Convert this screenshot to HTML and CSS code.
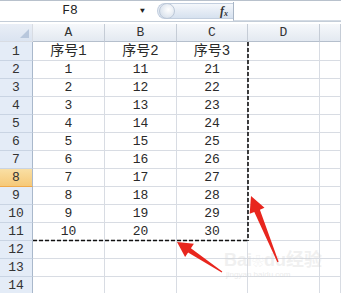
FILE: index.html
```
<!DOCTYPE html>
<html lang="zh-CN">
<head>
    <meta charset="UTF-8">
    <title>序号</title>
    <link rel="stylesheet" href="styles.css">
</head>
<body>
    <div class="formula-bar">
        <div class="name-box">F8</div>
        <div class="name-arrow">&#9660;</div>
        <div class="fx-pill">
            <span class="knob"></span>
            <span class="fx">f<sub>x</sub></span>
        </div>
        <div class="formula-input"></div>
    </div>

    <div class="sheet">
        <div class="corner"></div>
        <div class="col-head">A</div>
        <div class="col-head">B</div>
        <div class="col-head">C</div>
        <div class="col-head">D</div>
        <div class="col-head"></div>

        <div class="row-head first">1</div>
        <div class="cell first cjk">序号1</div>
        <div class="cell first cjk">序号2</div>
        <div class="cell first cjk">序号3</div>
        <div class="cell first"></div>
        <div class="cell first"></div>
    </div>

    <svg class="overlay" width="341" height="293" viewBox="0 0 341 293">
        <!-- copy marquee round A1:C11 -->
        <line x1="248" y1="42" x2="248" y2="241" class="marquee"/>
        <line x1="33" y1="240.5" x2="249" y2="240.5" class="marquee"/>
        <text x="224" y="266" class="wm">Bai<tspan class="paw">❀</tspan>du经验</text>
        <text x="226" y="277" class="wm-small">jingyan.baidu.com</text>
        <polygon class="arrow" points="177,242 193.9,243.7 190.9,248.2 222.3,271.6 221.7,272.4 188.1,252.4 185.1,257"/>
        <polygon class="arrow" points="251,196 264.5,207.8 259.9,209.7 278.6,261.7 277.4,262.3 254.3,212 249.7,213.8"/>
    </svg>

    <script>
        const sheet = document.querySelector('.sheet');
        for (let r = 2; r <= 14; r++) {
            const head = document.createElement('div');
            head.className = 'row-head' + (r === 8 ? ' active' : '');
            head.textContent = r;
            sheet.appendChild(head);
            const vals = r <= 11 ? [r - 1, r + 9, r + 19, '', ''] : ['', '', '', '', ''];
            vals.forEach(v => {
                const c = document.createElement('div');
                c.className = 'cell';
                c.textContent = v;
                sheet.appendChild(c);
            });
        }
    </script>
</body>
</html>
```

FILE: styles.css
```
body {
    margin: 0;
    width: 341px;
    height: 293px;
    overflow: hidden;
    background: #ffffff;
    font-family: "Liberation Mono", "DejaVu Sans Mono", monospace;
    font-size: 13px;
    color: #2a2a2a;
    position: relative;
}
.formula-bar {
    display: flex;
    height: 20px;
    border-top: 1px solid #b8c1cc;
    border-bottom: 1px solid #c4cdd8;
    margin-bottom: 2px;
    background: #ffffff;
}
.name-box {
    width: 140px;
    text-align: center;
    line-height: 19px;
    color: #222;
}
.name-arrow {
    width: 17px;
    font-size: 8px;
    line-height: 20px;
    color: #222;
}
.fx-pill {
    width: 76px;
    height: 16px;
    margin-top: 2px;
    border-radius: 9px 0 0 9px;
    background: linear-gradient(#f4f7fb, #d6e1ef);
    border: 1px solid #c3cfdf;
    border-right: none;
    display: flex;
    justify-content: space-between;
    align-items: center;
    box-sizing: border-box;
}
.knob {
    width: 14px;
    height: 14px;
    border-radius: 50%;
    background: radial-gradient(circle at 60% 40%, #ffffff, #cdd8e6);
    border: 1px solid #bcc8d8;
    margin-left: 1px;
}
.fx {
    font-family: "Liberation Serif", serif;
    font-style: italic;
    font-weight: bold;
    font-size: 12px;
    color: #333;
    margin-right: 5px;
}
.fx sub {
    font-size: 8px;
    vertical-align: -1px;
}
.formula-input {
    flex: 1;
    border-left: 1px solid #a9b6c6;
    border-bottom: 1px solid #d4dbe4;
    margin-top: 1px;
}
.sheet {
    display: grid;
    grid-template-columns: 33px 72px 72px 71px 72px 1fr;
    grid-template-rows: 18px 19px;
    grid-auto-rows: 18px;
}
.sheet > div {
    box-sizing: border-box;
    border-right: 1px solid #d8dce3;
    border-bottom: 1px solid #d8dce3;
    text-align: center;
    line-height: 18px;
}
.corner {
    background: linear-gradient(#e9eef6, #dbe4f1);
    position: relative;
}
.corner::after {
    content: "";
    position: absolute;
    right: 3px;
    bottom: 3px;
    border-left: 9px solid transparent;
    border-bottom: 9px solid #b8c7dc;
}
.sheet > .col-head {
    background: linear-gradient(#f6f8fb, #e3e9f1);
    border-right-color: #c5ccd6;
    border-bottom-color: #b5bfcc;
    color: #333;
}
.sheet > .row-head {
    background: #e4ecf7;
    border-right-color: #a9b8cb;
    border-bottom-color: #c9d4e3;
    color: #333;
}
.sheet > .row-head.active {
    background: linear-gradient(#f9dfa4, #f6c978);
    border-bottom-color: #f0a94a;
}
.sheet > .first {
    line-height: 19px;
}
.cjk {
    font-family: "Liberation Mono", "Noto Sans CJK SC", monospace;
    font-size: 14px;
}
.overlay {
    position: absolute;
    left: 0;
    top: 0;
}
.marquee {
    stroke: #111;
    stroke-width: 1.6;
    stroke-dasharray: 4 2;
}
.arrow {
    fill: #e8261e;
}
.wm {
    font-family: "Liberation Sans", "Noto Sans CJK SC", sans-serif;
    font-size: 18px;
    font-weight: bold;
    fill: #d0d0d0;
    opacity: 0.3;
}
.paw {
    font-size: 12px;
}
.wm-small {
    font-family: "Liberation Sans", sans-serif;
    font-size: 8px;
    fill: #d0d0d0;
    opacity: 0.4;
}
```
